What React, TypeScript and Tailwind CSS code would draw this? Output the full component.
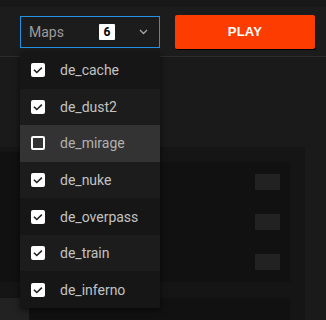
import React from "react";

const maps = [
  { name: "de_cache", checked: true },
  { name: "de_dust2", checked: true },
  { name: "de_mirage", checked: false },
  { name: "de_nuke", checked: true },
  { name: "de_overpass", checked: true },
  { name: "de_train", checked: true },
  { name: "de_inferno", checked: true },
];

function Check({ checked }: { checked: boolean }) {
  if (!checked) {
    return <div className="w-[14px] h-[14px] rounded-[2px] border-2 border-white box-border" />;
  }
  return (
    <div className="w-[14px] h-[14px] rounded-[2px] bg-white flex items-center justify-center">
      <svg width="14" height="14" viewBox="0 0 14 14">
        <path d="M3.5 7.3 L5.8 9.5 L10.3 5.2" fill="none" stroke="#1f1f1f" strokeWidth="1.6" strokeLinecap="square" />
      </svg>
    </div>
  );
}

export default function App() {
  return (
    <div
      className="relative w-[326px] h-[320px] overflow-hidden bg-[#1a1a1a] flex flex-col"
      style={{ fontFamily: "Roboto, 'Noto Sans', sans-serif" }}
    >
      <div className="h-[7px] bg-[#181818] shrink-0" />
      <div className="h-[50px] shrink-0 bg-[#1c1c1c] border-b border-[#2d2d2d] flex items-center pl-[20px] gap-[15px]">
        <div className="w-[140px] h-[32px] border border-[#2592e6] bg-[#1c1c1c] flex items-center pl-[8px] pr-[11px]">
          <span className="text-[14px] text-[#9c9c9c] leading-none">Maps</span>
          <span className="ml-auto mr-[24px] w-[16px] h-[16px] bg-white rounded-[1px] flex items-center justify-center text-[12px] font-bold text-black leading-none">
            6
          </span>
          <svg width="9" height="6" viewBox="0 0 9 6">
            <path d="M1 1 L4.5 4.5 L8 1" fill="none" stroke="#a8a8a8" strokeWidth="1.3" />
          </svg>
        </div>
        <button className="w-[140px] h-[34px] bg-[#fc3c00] rounded-[2px] shadow-[1px_1px_0_#000] flex items-center justify-center text-white text-[13px] font-bold tracking-[0.2px]" style={{ fontFamily: "'Liberation Sans', Arial, sans-serif" }}>
          PLAY
        </button>
      </div>

      <div className="flex-1 flex flex-col">
        <div className="h-[90px] shrink-0" />
        <div className="flex-1 flex w-[305px] bg-[#151515]">
          <div className="w-[20px] flex flex-col">
            <div className="h-[5px]" />
            <div className="h-[130px] bg-[#111111]" />
            <div className="h-[16px]" />
            <div className="flex-1 bg-[#222222]" />
          </div>
          <div className="flex-1 flex flex-col pr-[15px]">
            <div className="h-[15px]" />
            <div className="h-[120px] bg-[#111111] flex flex-col items-end pr-[10px] pt-[12px] gap-[24px]">
              <div className="w-[25px] h-[16px] bg-[#222222]" />
              <div className="w-[25px] h-[16px] bg-[#222222]" />
              <div className="w-[25px] h-[16px] bg-[#222222]" />
            </div>
            <div className="h-[16px]" />
            <div className="flex-1 flex">
              <div className="w-[9px] bg-[#222222]" />
              <div className="flex-1 bg-[#111111]" />
            </div>
          </div>
        </div>
      </div>

      <div className="absolute left-[20px] top-[52px] w-[140px] h-[256px] flex flex-col shadow-[0_2px_6px_rgba(0,0,0,0.6)] rounded-[2px] overflow-hidden">
        {maps.map((m, i) => (
          <div
            key={m.name}
            className={
              "flex-1 flex items-center pl-[11px] gap-[15px] " +
              (i === 2 ? "bg-[#333333]" : i % 2 === 0 ? "bg-[#161616]" : "bg-[#1c1c1c]")
            }
          >
            <Check checked={m.checked} />
            <span className={"text-[14px] leading-none " + (i === 2 ? "text-[#b0b0b0]" : "text-[#c2c2c2]")}>{m.name}</span>
          </div>
        ))}
      </div>
    </div>
  );
}
